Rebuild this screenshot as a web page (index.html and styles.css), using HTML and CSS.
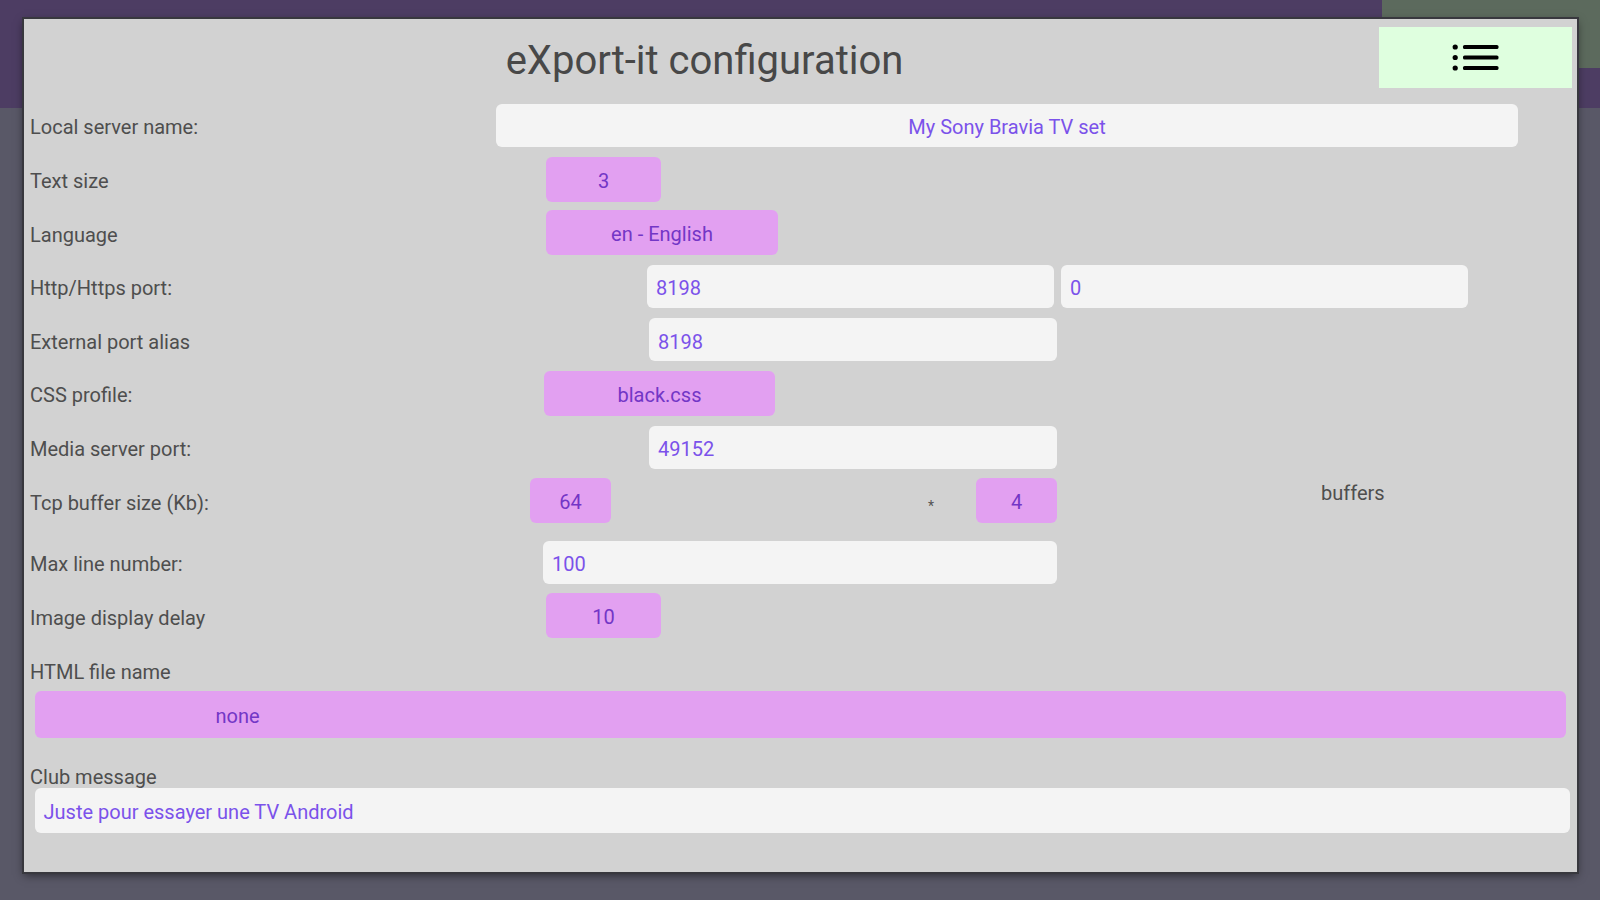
FILE: index.html
```html
<!DOCTYPE html>
<html lang="en">
<head>
<meta charset="utf-8">
<title>eXport-it configuration</title>
<link rel="stylesheet" href="styles.css">
</head>
<body>
<div class="backdrop">
  <div class="bg-top"></div>
  <div class="bg-green"></div>
</div>
<div class="dialog">
  <header class="dlg-head">
    <h1 class="title">eXport-it configuration</h1>
    <button class="menu-btn" type="button" aria-label="menu">
      <svg width="47" height="27" viewBox="0 0 47 27">
        <circle cx="3.2" cy="3" r="2.6" fill="#000"/>
        <circle cx="3.2" cy="13.5" r="2.6" fill="#000"/>
        <circle cx="3.2" cy="24" r="2.6" fill="#000"/>
        <rect x="11" y="1" width="35.5" height="4" rx="1.6" fill="#000"/>
        <rect x="11" y="11.5" width="35.5" height="4" rx="1.6" fill="#000"/>
        <rect x="11" y="22" width="35.5" height="4" rx="1.6" fill="#000"/>
      </svg>
    </button>
  </header>
  <div class="form">
    <div class="row">
      <span class="label">Local server name:</span>
      <div class="ctrl"><div class="field center w-name">My Sony Bravia TV set</div></div>
    </div>
    <div class="row">
      <span class="label">Text size</span>
      <div class="ctrl off-50"><div class="btn w-small">3</div></div>
    </div>
    <div class="row">
      <span class="label">Language</span>
      <div class="ctrl off-50"><div class="btn w-lang">en - English</div></div>
    </div>
    <div class="row">
      <span class="label">Http/Https port:</span>
      <div class="ctrl off-151 pair"><div class="field w-port">8198</div><div class="field w-port">0</div></div>
    </div>
    <div class="row">
      <span class="label">External port alias</span>
      <div class="ctrl off-153"><div class="field w-port2">8198</div></div>
    </div>
    <div class="row">
      <span class="label">CSS profile:</span>
      <div class="ctrl off-48"><div class="btn w-css">black.css</div></div>
    </div>
    <div class="row">
      <span class="label">Media server port:</span>
      <div class="ctrl off-153"><div class="field w-port2">49152</div></div>
    </div>
    <div class="row row-tcp">
      <span class="label">Tcp buffer size (Kb):</span>
      <div class="ctrl off-34 tcp">
        <div class="btn w-tcp">64</div>
        <span class="star">*</span>
        <div class="btn w-tcp">4</div>
        <span class="buffers">buffers</span>
      </div>
    </div>
    <div class="row">
      <span class="label">Max line number:</span>
      <div class="ctrl off-47"><div class="field w-max">100</div></div>
    </div>
    <div class="row">
      <span class="label">Image display delay</span>
      <div class="ctrl off-50"><div class="btn w-small">10</div></div>
    </div>
    <div class="block-label html-label">HTML file name</div>
    <div class="btn wide-btn">none</div>
    <div class="block-label club-label">Club message</div>
    <div class="field wide-field">Juste pour essayer une TV Android</div>
  </div>
</div>
</body>
</html>
```
FILE: styles.css
```css
html, body {
  margin: 0;
  padding: 0;
}
body {
  width: 1600px;
  height: 900px;
  overflow: hidden;
  position: relative;
  background: #595867;
  font-family: Roboto, "Noto Sans", "Liberation Sans", sans-serif;
}
.backdrop {
  position: absolute;
  inset: 0;
}
.bg-top {
  position: absolute;
  left: 0;
  top: 0;
  width: 1600px;
  height: 108px;
  background: #4d3d63;
}
.bg-green {
  position: absolute;
  left: 1382px;
  top: 0;
  width: 218px;
  height: 68px;
  background: #5c6a5d;
}
.dialog {
  position: absolute;
  left: 24px;
  top: 19px;
  width: 1553px;
  height: 853px;
  box-sizing: border-box;
  background: #d2d2d2;
  box-shadow: 0 0 0 2px #38383e, 0 3px 9px rgba(0, 0, 0, 0.55);
  padding: 8px 5px 0 6px;
  display: flex;
  flex-direction: column;
}
.dlg-head {
  display: flex;
  align-items: flex-start;
  height: 71.7px;
  flex: none;
}
.title {
  flex: 1;
  margin: 0;
  padding-top: 3px;
  text-align: center;
  font-weight: 400;
  font-size: 40px;
  line-height: 61px;
  color: #484848;
}
.menu-btn {
  width: 193px;
  height: 61px;
  border: 0;
  padding: 0;
  margin: 0;
  background: #dfffdf;
  display: flex;
  align-items: center;
  justify-content: center;
}
.form {
  display: flex;
  flex-direction: column;
}
.row {
  display: grid;
  grid-template-columns: 466px 1fr;
  align-items: center;
  height: 53.6px;
}
.row-tcp {
  margin-bottom: 8px;
}
.label, .block-label {
  font-size: 20px;
  color: #4e4e4e;
  white-space: nowrap;
}
.label {
  padding-top: 4px;
}
.ctrl {
  display: flex;
  align-items: center;
}
.off-34 { padding-left: 34px; }
.off-47 { padding-left: 47px; }
.off-48 { padding-left: 48px; }
.off-50 { padding-left: 50px; }
.off-151 { padding-left: 151px; }
.off-153 { padding-left: 153px; }
.pair {
  gap: 7px;
}
.field {
  box-sizing: border-box;
  height: 43px;
  background: #f4f4f4;
  border-radius: 6px;
  color: #7b52ea;
  font-size: 20px;
  display: flex;
  align-items: center;
  padding: 4px 0 0 9px;
  white-space: nowrap;
}
.field.center {
  justify-content: center;
  padding-left: 0;
}
.btn {
  box-sizing: border-box;
  height: 45px;
  background: #e2a0f1;
  border-radius: 6px;
  color: #7336c6;
  font-size: 20px;
  display: flex;
  align-items: center;
  justify-content: center;
  padding-top: 3px;
  white-space: nowrap;
}
.w-name { width: 1022px; }
.w-small { width: 115px; }
.w-lang { width: 232px; }
.w-port { width: 407px; }
.w-port2 { width: 408px; }
.w-css { width: 231px; }
.w-tcp { width: 81px; }
.w-max { width: 514px; }
.star {
  width: 8px;
  margin-left: 316px;
  margin-right: 41px;
  margin-top: 10px;
  font-size: 14px;
  color: #555;
  text-align: center;
}
.buffers {
  margin-left: 264px;
  margin-top: -16px;
  font-size: 20px;
  color: #4e4e4e;
}
.html-label {
  margin-top: 17px;
  line-height: 24px;
}
.wide-btn {
  margin: 7.3px 6px 0 4.5px;
  height: 47px;
  justify-content: flex-start;
  padding-left: 181px;
}
.club-label {
  margin-top: 27px;
  line-height: 24px;
  margin-bottom: -1px;
}
.wide-field {
  margin: 0 2px 0 4.5px;
  height: 45px;
}
```
